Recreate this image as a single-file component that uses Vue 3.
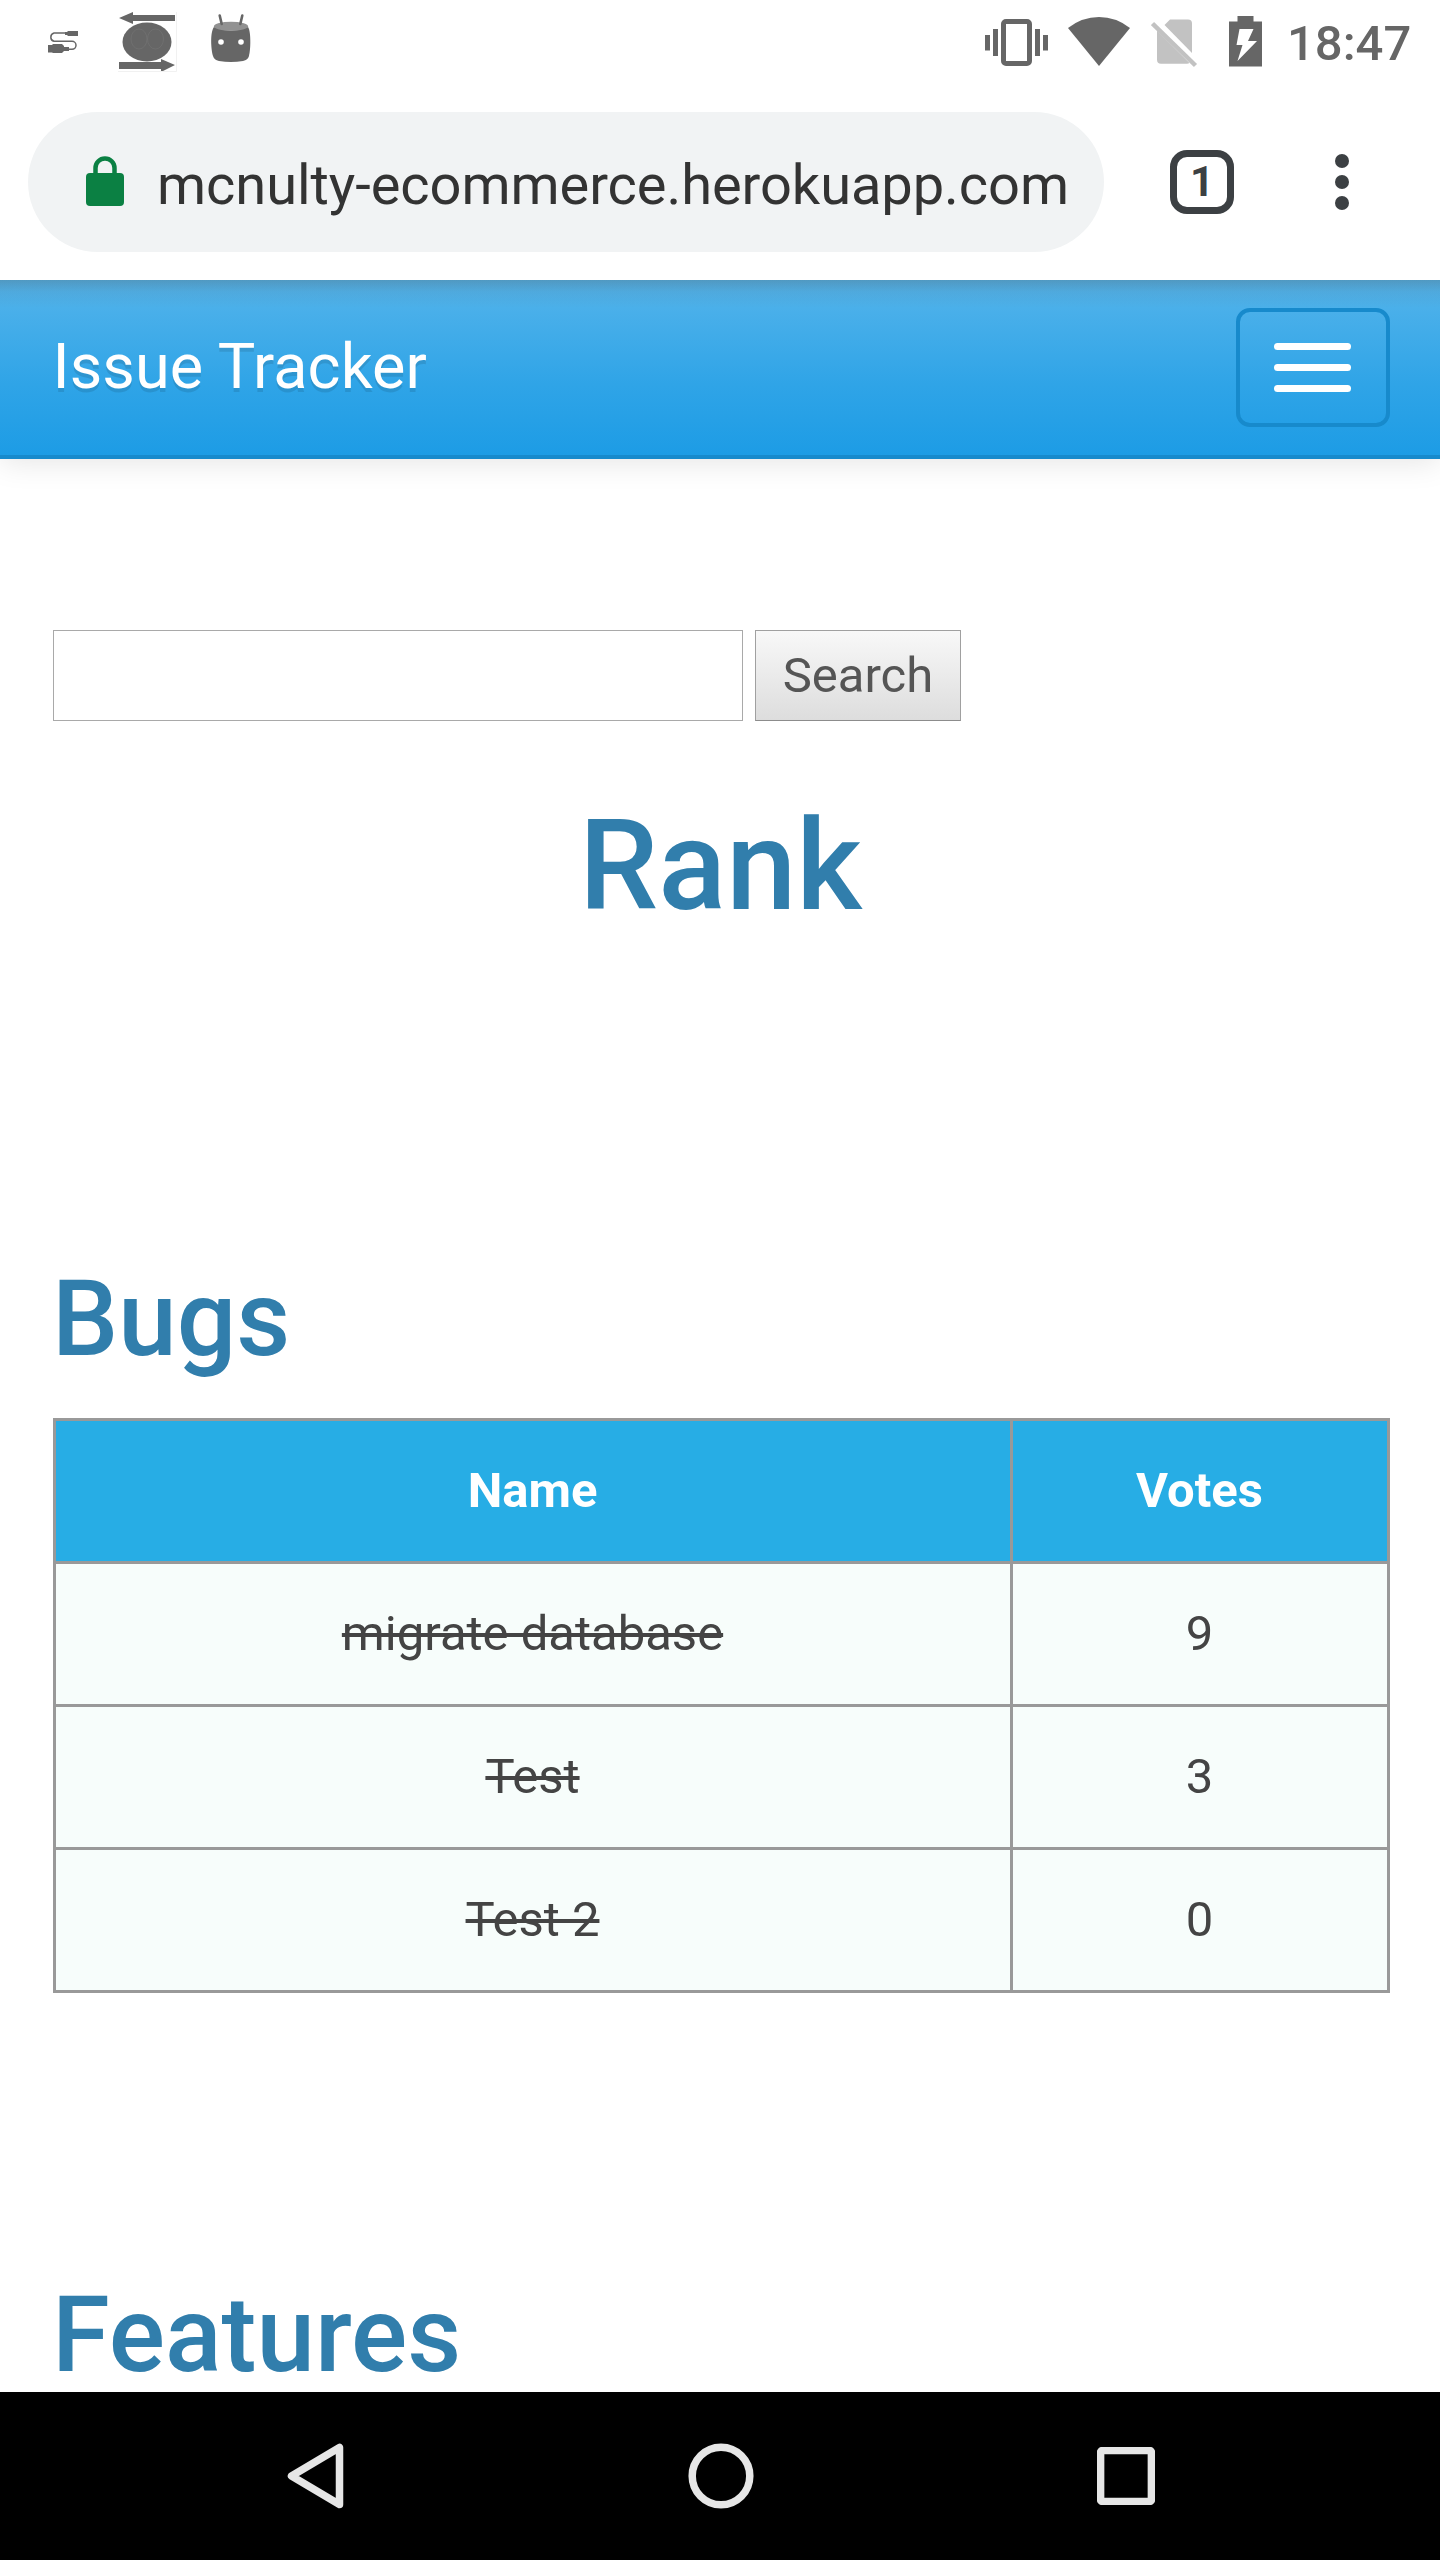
<script setup>
const bugs = [
  { name: 'migrate database', votes: 9 },
  { name: 'Test', votes: 3 },
  { name: 'Test 2', votes: 0 },
]
</script>

<template>
  <div class="screen">
    <header class="status">
      <div class="status-left">
        <svg width="32" height="84" viewBox="47 0 32 84">
          <path d="M66 33H54a4.3 4.3 0 0 0 0 8.300H72a3.900 3.900 0 0 1 0 8H68" fill="none" stroke="#666" stroke-width="1.500" />
          <path d="M65 32h2l1-1h10v5H68l-1-1h-2zM48 45h4l1-1h9l2 2v1h5v4h-5l-2 2h-9l-1-.5h-4z" fill="#666" />
        </svg>
        <svg width="60" height="84" viewBox="118 0 60 84">
          <path d="M119 18l14-6v3h42v6h-42v3zM175 65l-14-6v3h-42v7h42v3z" fill="#666" />
          <ellipse cx="147" cy="42" rx="24.500" ry="19.500" fill="#666" />
          <path d="M176.500 12v59.500H117" fill="none" stroke="#f1f1f1" />
          <g fill="none" stroke="#717171" stroke-width=".8">
            <ellipse cx="139" cy="39" rx="8" ry="10" />
            <ellipse cx="155.500" cy="39" rx="8" ry="10" />
          </g>
        </svg>
        <svg width="42" height="84" viewBox="210 0 42 84">
          <path d="M214 27Q231 34 248 27C251 31 251 49 249 56Q248 60 243 61Q231 63 219 61Q214 60 213 56C211 49 210 32 214 27Z" fill="#666" />
          <ellipse cx="231" cy="26.300" rx="17" ry="4.500" fill="#919191" />
          <path d="M219.700 15.500l2 8.500M242.300 15.500l-2 8.500" stroke="#666" stroke-width="2.600" stroke-linecap="round" />
          <circle cx="221" cy="42" r="2.800" fill="#fff" />
          <circle cx="241" cy="42" r="2.800" fill="#fff" />
        </svg>
      </div>
      <div class="status-right">
        <svg class="vibrate" width="64" height="84" viewBox="985 0 64 84">
          <path d="M985 35h5v15.500h-5zM993 29h5v27h-5zM1035 29h5v27h-5zM1043 35h5v15.500h-5z" fill="#666" />
          <rect x="1003.500" y="21.500" width="26" height="42" rx="2.500" fill="none" stroke="#666" stroke-width="5" />
        </svg>
        <svg class="wifi" width="62" height="84" viewBox="1068 0 62 84">
          <path d="M1068 28Q1082 17 1099 17T1130 28L1099 66Z" fill="#666" />
        </svg>
        <svg class="sim" width="47" height="84" viewBox="1151 0 47 84">
          <path d="M1164.500 25l5.500-5.500h18a4 4 0 0 1 4 4v29.500z" fill="#c2c2c2" />
          <path d="M1157 30.500l32.500 32.500q-1 .800-2.500.800h-26a4 4 0 0 1-4-4z" fill="#c2c2c2" />
          <path d="M1152.500 23.500l43 42" stroke="#c2c2c2" stroke-width="4.500" />
        </svg>
        <svg class="battery" width="33" height="84" viewBox="1229 0 33 84">
          <path d="M1229 21.500h8.500V16h16v5.500h8.500V66.500h-33z" fill="#666" />
          <path d="M1239.500 29h14l-5.500 12h9L1237.500 61l5-16h-6z" fill="#fff" />
        </svg>
        <span class="clock">18:47</span>
      </div>
    </header>

    <div class="toolbar">
      <div class="omnibox">
        <svg width="38" height="52" viewBox="0 0 38 52">
          <rect x="0" y="17" width="38" height="33" rx="4" fill="#0b8043" />
          <path d="M9.500 18V12a9.500 9.500 0 0 1 19 0v6" fill="none" stroke="#0b8043" stroke-width="4.500" />
        </svg>
        <span class="url">mcnulty-ecommerce.herokuapp.com</span>
      </div>
      <div class="tabs">1</div>
      <svg class="menu" width="14" height="56" viewBox="0 0 14 56" fill="#3c4043">
        <circle cx="7" cy="7" r="7" />
        <circle cx="7" cy="28" r="7" />
        <circle cx="7" cy="49" r="7" />
      </svg>
    </div>

    <nav class="navbar">
      <span class="brand">Issue Tracker</span>
      <button class="toggle" aria-label="Toggle navigation">
        <i></i><i></i><i></i>
      </button>
    </nav>

    <main class="page">
      <form class="search" @submit.prevent>
        <input type="text" aria-label="Search issues" />
        <button>Search</button>
      </form>
      <h1>Rank</h1>
      <h2>Bugs</h2>
      <table>
        <thead>
          <tr><th class="name">Name</th><th>Votes</th></tr>
        </thead>
        <tbody>
          <tr v-for="bug in bugs" :key="bug.name">
            <td><s>{{ bug.name }}</s></td>
            <td>{{ bug.votes }}</td>
          </tr>
        </tbody>
      </table>
      <h2 class="features">Features</h2>
    </main>

    <footer class="softkeys">
      <svg class="back" width="58" height="66" viewBox="0 0 58 66">
        <path d="M4.500 33L52.500 4.500V61.500Z" />
      </svg>
      <svg class="home" width="66" height="66" viewBox="0 0 66 66">
        <circle cx="33" cy="33" r="28.800" />
      </svg>
      <svg class="recent" width="58" height="58" viewBox="0 0 58 58">
        <rect x="3.600" y="3.600" width="50.800" height="50.800" rx="1.500" />
      </svg>
    </footer>
  </div>
</template>

<style>
body {
  margin: 0;
  background: #fff;
}
</style>

<style scoped>
.screen {
  position: relative;
  z-index: 0;
  width: 1440px;
  height: 2560px;
  display: flex;
  flex-direction: column;
  overflow: hidden;
  background: #fff;
  font-family: Roboto, sans-serif;
  color: #444;
}
svg {
  display: block;
  flex: none;
}
.status {
  flex: none;
  height: 84px;
  display: flex;
  justify-content: space-between;
  padding: 0 29px 0 47px;
}
.status-left {
  display: flex;
  gap: 39px;
}
.status-left svg:last-child {
  margin-left: -7px;
}
.status-right {
  display: flex;
}
.wifi { margin-left: 19px; }
.sim { margin-left: 21px; }
.battery { margin-left: 31px; }
.clock {
  margin-left: 25px;
  width: 124px;
  line-height: 88px;
  font-size: 49px;
  font-weight: 500;
  color: #666;
  white-space: nowrap;
}
.toolbar {
  flex: none;
  height: 196px;
  display: flex;
  align-items: center;
  padding-left: 28px;
  box-sizing: border-box;
}
.omnibox {
  width: 1076px;
  height: 140px;
  box-sizing: border-box;
  padding-left: 58px;
  border-radius: 70px;
  background: #f1f3f4;
  display: flex;
  align-items: center;
}
.url {
  margin-left: 33px;
  padding-top: 6px;
  font-size: 56px;
  line-height: 66px;
  letter-spacing: -0.06px;
  color: #333;
  white-space: nowrap;
}
.tabs {
  margin-left: 66px;
  width: 64px;
  height: 64px;
  box-sizing: border-box;
  border: 7px solid #3c4043;
  border-radius: 17px;
  text-align: center;
  font-size: 42px;
  line-height: 50px;
  font-weight: 700;
  color: #3c4043;
}
.menu {
  margin-left: 101px;
}
.navbar {
  flex: none;
  height: 179px;
  box-sizing: border-box;
  border-bottom: 4px solid #178acc;
  padding: 0 50px 0 52.5px;
  display: flex;
  justify-content: space-between;
  align-items: center;
  background:
    linear-gradient(rgba(70, 70, 70, .25), rgba(70, 70, 70, .08) 12px, rgba(70, 70, 70, 0) 28px),
    linear-gradient(#54b4eb, #2fa4e7 60%, #1d9ce5);
  box-shadow: 0 3.5px 28px rgba(0, 0, 0, .1);
  clip-path: inset(0 0 -60px 0);
}
.brand {
  padding-bottom: 2px;
  font-size: 63px;
  line-height: 70px;
  letter-spacing: 0.08px;
  color: #fff;
  text-shadow: 0 3.5px 0 rgba(0, 0, 0, .1);
}
.toggle {
  width: 154px;
  height: 119px;
  padding: 0 1px 0 0;
  border: 4px solid #178acc;
  border-radius: 14px;
  background: transparent;
  display: flex;
  flex-direction: column;
  align-items: center;
  justify-content: center;
  gap: 14px;
}
.toggle i {
  width: 77px;
  height: 7px;
  border-radius: 3.5px;
  background: #fff;
}
.page {
  flex: 1;
  min-height: 0;
  overflow: hidden;
  padding: 171px 50px 0 53px;
  position: relative;
  z-index: -1;
}
.search {
  display: flex;
  gap: 12px;
}
.search input {
  width: 690px;
  height: 91px;
  box-sizing: border-box;
  border: 1px solid #a9a9a9;
  border-radius: 0;
  padding: 0;
  background: #fff;
}
.search button {
  width: 206px;
  height: 91px;
  padding: 0;
  border: 1px solid #a0a0a0;
  border-bottom-color: #8c8c8c;
  border-radius: 0;
  background: linear-gradient(#f8f8f8, #ddd);
  font-family: Roboto, sans-serif;
  font-size: 49px;
  line-height: 58px;
  color: #555;
}
h1, h2 {
  margin: 0;
  font-weight: 500;
  color: #317eac;
}
h1 {
  margin-top: 76px;
  padding-right: 2px;
  font-size: 126px;
  line-height: 138px;
  text-align: center;
}
h2 {
  margin: 327px 0 0 -1px;
  font-size: 105px;
  line-height: 116px;
}
table {
  margin-top: 40px;
  width: 1337px;
  table-layout: fixed;
  border-collapse: separate;
  border-spacing: 3px;
  background: #999;
  font-size: 49px;
  line-height: 70px;
  text-align: center;
}
th, td {
  height: 140px;
  padding: 0 1px 0 0;
  box-sizing: border-box;
  background: #f7fdfb;
}
th {
  background: #27ade5;
  color: #fff;
  font-weight: 700;
}
.name {
  width: 954px;
}
s {
  text-decoration-thickness: 4px;
}
h2.features {
  margin-top: 285px;
}
.softkeys {
  flex: none;
  height: 168px;
  display: flex;
  align-items: center;
  padding-left: 287px;
  box-sizing: border-box;
  background: #000;
}
.softkeys svg {
  fill: none;
  stroke: #e6e6e6;
  stroke-width: 7.5px;
  stroke-linejoin: round;
}
.home { margin-left: 342.5px; }
.recent { margin-left: 343.5px; }
</style>
